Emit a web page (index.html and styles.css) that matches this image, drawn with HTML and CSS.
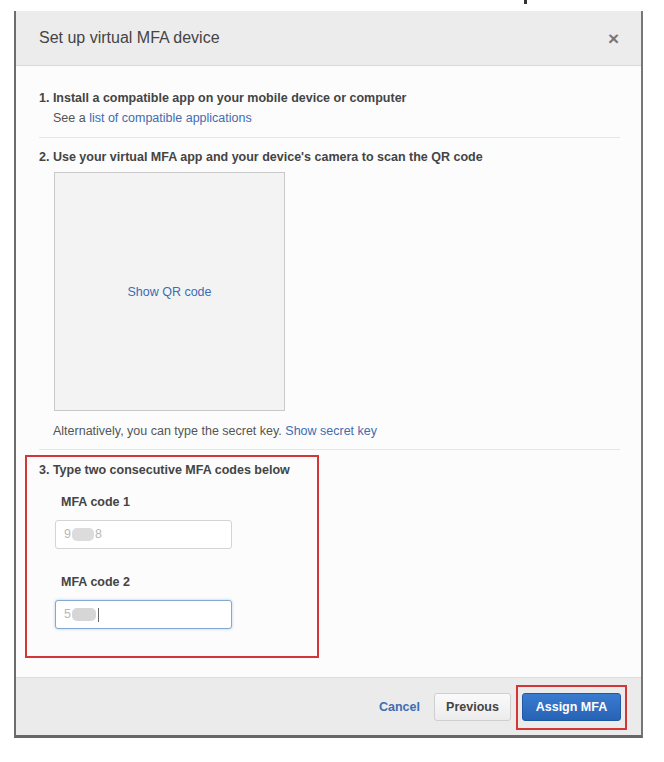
FILE: index.html
```html
<!DOCTYPE html>
<html lang="en">
<head>
<meta charset="utf-8">
<title>Set up virtual MFA device</title>
<link rel="stylesheet" href="styles.css">
</head>
<body>
<div class="topstrip"><span class="frag"></span></div>
<div class="modal">
  <div class="header">
    <h1 class="title">Set up virtual MFA device</h1>
    <span class="close">&times;</span>
  </div>
  <div class="content">
    <div class="step">
      <div class="step-title">1. Install a compatible app on your mobile device or computer</div>
      <div class="step-sub">See a <a class="link" href="#">list of compatible applications</a></div>
    </div>
    <div class="divider"></div>
    <div class="step">
      <div class="step-title">2. Use your virtual MFA app and your device's camera to scan the QR code</div>
      <div class="qr"><a class="link" href="#">Show QR code</a></div>
      <div class="alt">Alternatively, you can type the secret key. <a class="link" href="#">Show secret key</a></div>
    </div>
    <div class="divider"></div>
    <div class="step step3">
      <div class="step-title">3. Type two consecutive MFA codes below</div>
      <div class="field">
        <div class="label">MFA code 1</div>
        <div class="input"><span class="digit">9</span><span class="blur"></span><span class="digit">8</span></div>
      </div>
      <div class="field">
        <div class="label">MFA code 2</div>
        <div class="input focused"><span class="digit">5</span><span class="blur wide"></span><span class="caret"></span></div>
      </div>
      <div class="annot annot-codes"></div>
    </div>
  </div>
  <div class="footer">
    <a class="cancel" href="#">Cancel</a>
    <button class="btn btn-secondary">Previous</button>
    <div class="primary-wrap">
      <button class="btn btn-primary">Assign MFA</button>
      <div class="annot annot-btn"></div>
    </div>
  </div>
</div>
</body>
</html>
```
FILE: styles.css
```css
* { box-sizing: border-box; }
html, body { margin: 0; padding: 0; background: #ffffff; }
body {
  font-family: "Liberation Sans", Arial, Helvetica, sans-serif;
  color: #444;
  font-size: 12.5px;
}
.topstrip { height: 11px; padding-left: 524px; }
.frag { display: block; width: 3px; height: 4px; background: #333; }

.modal {
  margin-left: 14px;
  width: 629px;
  background: #fcfcfc;
  border-left: 2px solid #6d6d6d;
  border-right: 2px solid #777;
  border-bottom: 3px solid #666;
}
.header {
  height: 55px;
  background: #ececec;
  border-bottom: 1px solid #dadada;
  display: flex;
  align-items: center;
  justify-content: space-between;
  padding: 0 22px 0 23px;
}
.title {
  margin: 0;
  font-size: 16px;
  font-weight: normal;
  color: #444;
}
.close {
  font-size: 19px;
  font-weight: bold;
  color: #777;
  line-height: 1;
  margin-top: 1px;
}
.content { padding: 23px 21px 21px 23px; }
.step-title { font-weight: bold; line-height: 18px; color: #444; }
.step-sub { padding-left: 14px; line-height: 19px; margin-top: 2px; color: #555; }
.link { color: #3d6db3; text-decoration: none; }
.divider { height: 1px; background: #e6e6e6; margin: 9px 0 10px; }
.qr {
  margin: 6px 0 0 15px;
  width: 231px;
  height: 239px;
  background: #f3f3f3;
  border: 1px solid #c9c9c9;
  display: flex;
  align-items: center;
  justify-content: center;
}
.alt { margin: 11px 0 0 14px; line-height: 18px; color: #555; }
.step3 { position: relative; padding-top: 1px; padding-bottom: 27px; }
.field { padding-left: 16px; }
.label { font-weight: bold; line-height: 18px; margin: 14px 0 9px 6px; color: #444; }
.field + .field .label { margin-top: 24px; }
.input {
  width: 177px;
  height: 29px;
  border: 1px solid #d4d4d4;
  border-radius: 3px;
  background: #fff;
  display: flex;
  align-items: center;
  padding-left: 8px;
  color: #b8b8b8;
  font-size: 12.5px;
}
.input.focused {
  border-color: #86a7d2;
  box-shadow: 0 0 3px rgba(90, 140, 210, 0.45);
}
.digit { line-height: 1; }
.blur {
  display: inline-block;
  width: 22px;
  height: 13px;
  background: #dcdcdc;
  border-radius: 5px;
  margin: 0 1px;
}
.blur.wide { width: 24px; background: #d6d6d6; }
.caret { display: inline-block; width: 1px; height: 14px; background: #666; margin-left: 1px; }

.annot { position: absolute; border: 2px solid #d43535; pointer-events: none; }
.annot-codes { left: -14px; top: -5px; width: 294px; height: 203px; }

.footer {
  height: 58px;
  background: #ebebeb;
  border-top: 1px solid #dcdcdc;
  display: flex;
  align-items: center;
  justify-content: flex-end;
  padding-right: 20px;
}
.cancel {
  color: #3d6db3;
  font-weight: bold;
  text-decoration: none;
  margin-right: 14px;
}
.btn {
  font-family: "Liberation Sans", Arial, Helvetica, sans-serif;
  font-size: 12.5px;
  font-weight: bold;
  height: 28px;
  border-radius: 3px;
  cursor: pointer;
}
.btn-secondary {
  width: 77px;
  color: #444;
  background: linear-gradient(#fafafa, #ececec);
  border: 1px solid #cfcfcf;
}
.primary-wrap { position: relative; margin-left: 11px; }
.btn-primary {
  display: block;
  width: 99px;
  color: #fff;
  background: linear-gradient(#3a7bd0, #2763b5);
  border: 1px solid #1f58a5;
}
.annot-btn { left: -6px; top: -8px; width: 111px; height: 45px; }
```
